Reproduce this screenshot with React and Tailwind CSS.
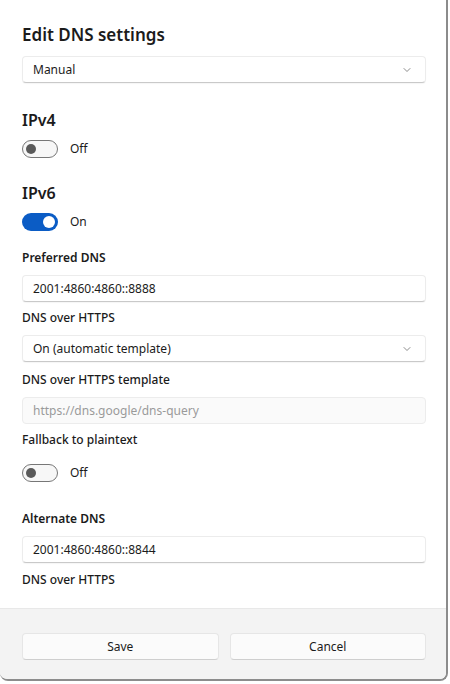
import { ChevronDown } from "lucide-react";

function Toggle({ on, label }) {
  return (
    <div className="flex items-center gap-3">
      {on ? (
        <div className="flex h-[18px] w-[36px] items-center justify-end rounded-full bg-[#0b5cc5] pr-[3px]">
          <div className="h-[12px] w-[12px] rounded-full bg-white" />
        </div>
      ) : (
        <div className="flex h-[18px] w-[36px] items-center rounded-full border border-[#777] bg-[#f7f7f7] pl-[3px]">
          <div className="h-[10px] w-[10px] rounded-full bg-[#5a5a5a]" />
        </div>
      )}
      <span className="text-[12px] text-[#1b1b1b]">{label}</span>
    </div>
  );
}

function Field({ value, muted, select, className = "" }) {
  return (
    <div
      className={`flex h-[27px] items-center justify-between rounded-[4px] border border-[#ececec] pr-[12px] pl-[10px] text-[12px] ${
        muted
          ? "bg-[#fafafa] text-[#9a9a9a]"
          : "border-b-[#c9c9c9] bg-white text-[#1b1b1b] shadow-[0_1px_1px_rgba(0,0,0,0.04)]"
      } ${className}`}
    >
      <span>{value}</span>
      {select && <ChevronDown size={12} strokeWidth={1.5} className="text-[#666]" />}
    </div>
  );
}

export default function App() {
  return (
    <div
      className="h-[684px] w-[450px] overflow-hidden bg-white"
      style={{ fontFamily: '"Noto Sans", "Open Sans", sans-serif' }}
    >
      <div className="flex h-[681px] w-[448px] flex-col overflow-hidden rounded-b-[8px] border-r-2 border-b-2 border-[#8c8c8c] bg-white">
        {/* scrolling body */}
        <div className="flex h-[608px] flex-col pt-[23px] pr-[20px] pl-[22px]">
          <h1 className="text-[17px] leading-[24px] font-semibold text-[#1b1b1b]">
            Edit DNS settings
          </h1>
          <Field value="Manual" select className="mt-[9px]" />

          <h2 className="mt-[26px] text-[16px] leading-[22px] font-semibold text-[#1b1b1b]">IPv4</h2>
          <div className="mt-[9px]">
            <Toggle label="Off" />
          </div>

          <h2 className="mt-[24px] text-[16px] leading-[22px] font-semibold text-[#1b1b1b]">IPv6</h2>
          <div className="mt-[9px]">
            <Toggle on label="On" />
          </div>

          <p className="mt-[19px] text-[12px] leading-[16px] font-semibold text-[#1b1b1b]">Preferred DNS</p>
          <Field value="2001:4860:4860::8888" className="mt-[9px]" />

          <p className="mt-[8px] text-[12px] leading-[16px] font-medium text-[#1b1b1b]">DNS over HTTPS</p>
          <Field value="On (automatic template)" select className="mt-[9px]" />

          <p className="mt-[10px] text-[12px] leading-[16px] font-medium text-[#1b1b1b]">DNS over HTTPS template</p>
          <Field value="https://dns.google/dns-query" muted className="mt-[9px]" />

          <p className="mt-[8px] text-[12px] leading-[16px] font-medium text-[#1b1b1b]">Fallback to plaintext</p>
          <div className="mt-[16px]">
            <Toggle label="Off" />
          </div>

          <p className="mt-[29px] text-[12px] leading-[16px] font-semibold text-[#1b1b1b]">Alternate DNS</p>
          <Field value="2001:4860:4860::8844" className="mt-[9px]" />

          <p className="mt-[9px] text-[12px] leading-[16px] font-medium text-[#1b1b1b]">DNS over HTTPS</p>
        </div>

        {/* footer */}
        <div className="flex flex-1 gap-[11px] border-t border-[#e8e8e8] bg-[#f3f3f3] pt-[24px] pr-[20px] pl-[22px]">
          <button className="h-[27px] flex-1 rounded-[4px] border border-[#e6e6e6] border-b-[#cfcfcf] bg-[#fbfbfb] text-[12px] text-[#1b1b1b]">
            Save
          </button>
          <button className="h-[27px] flex-1 rounded-[4px] border border-[#e6e6e6] border-b-[#cfcfcf] bg-[#fbfbfb] text-[12px] text-[#1b1b1b]">
            Cancel
          </button>
        </div>
      </div>
    </div>
  );
}
